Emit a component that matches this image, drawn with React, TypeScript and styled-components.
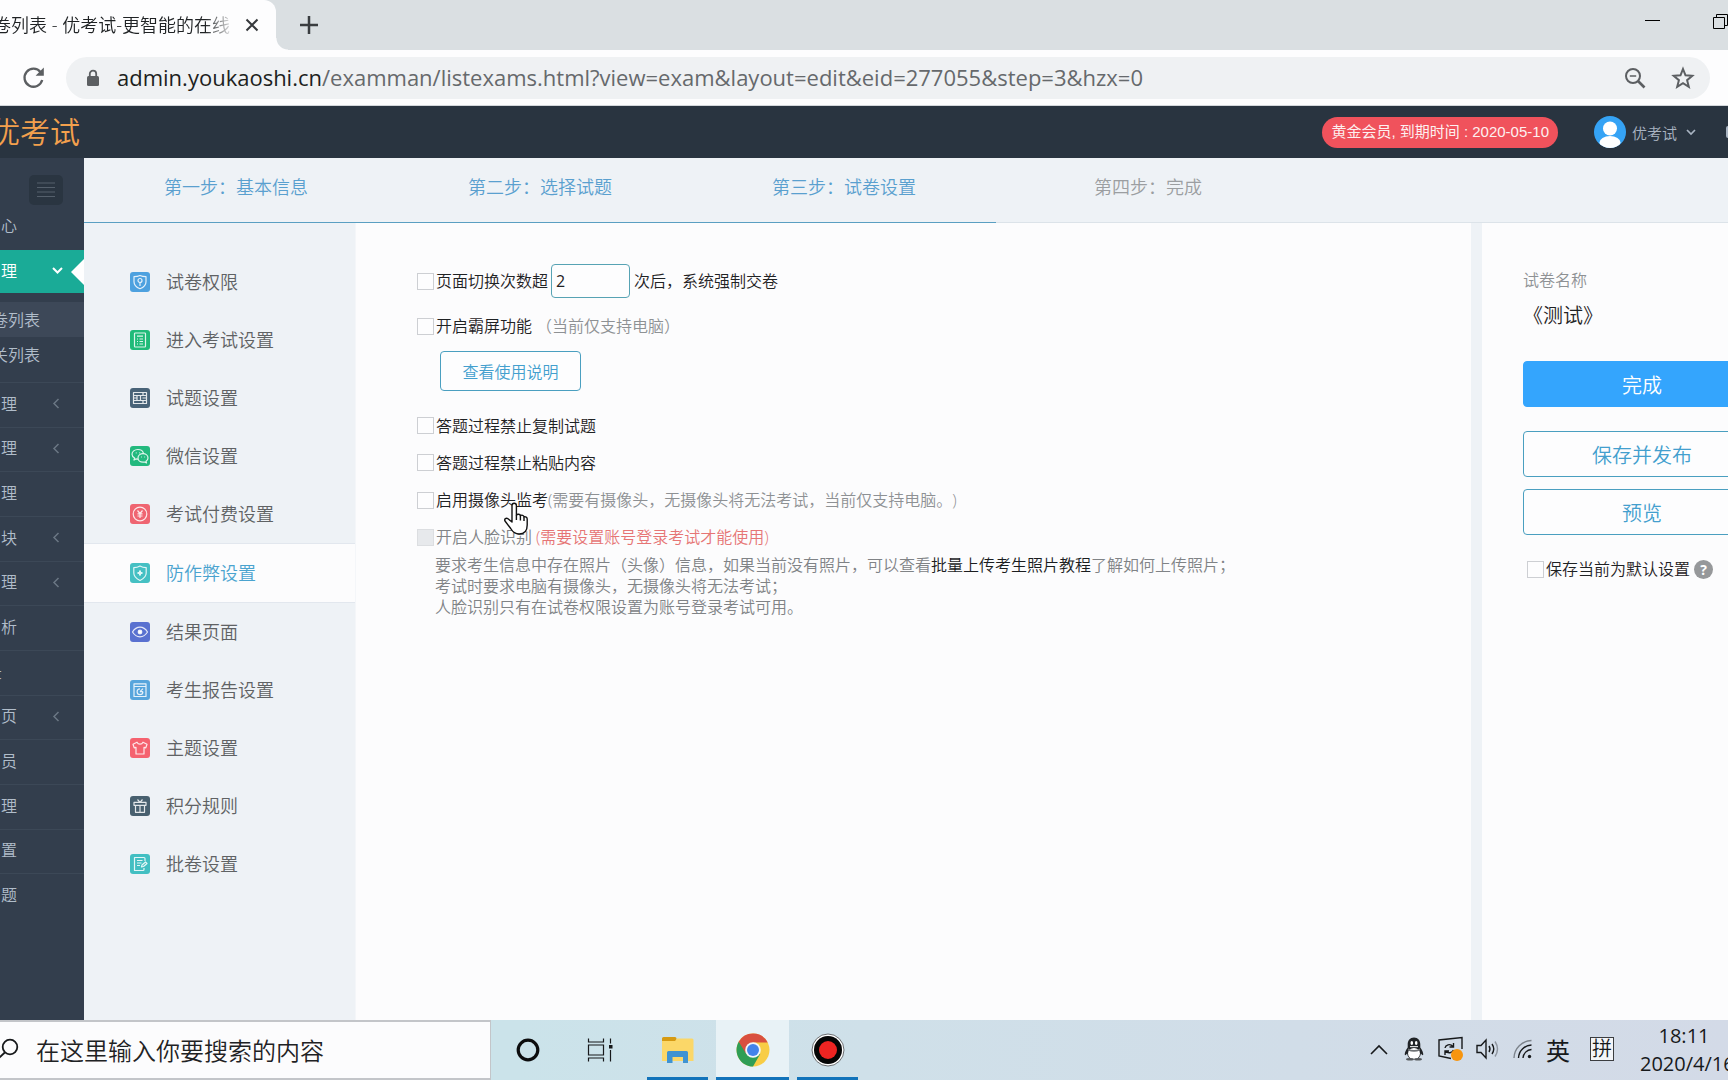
import React from 'react';
import styled, { createGlobalStyle } from 'styled-components';

const CJK = '"Noto Sans CJK SC", sans-serif';

const Global = createGlobalStyle`
  *, *::before, *::after { box-sizing: border-box; }
  body {
    margin: 0;
    overflow: hidden;
    font-family: "Open Sans", ${CJK};
    font-size: 16px;
    font-weight: 350;
    color: #1f2224;
    text-spacing-trim: space-all;
  }
  button, input { font: inherit; color: inherit; }
  button { padding: 0; border: 0; background: none; cursor: pointer; }
  ul { list-style: none; margin: 0; padding: 0; }
  a { color: inherit; text-decoration: none; }
  svg { display: block; flex: none; }
`;

const Screen = styled.div`
  display: flex;
  flex-direction: column;
  height: 100vh;
  overflow: hidden;
  background: #fcfcfd;
`;

/* ---------- browser chrome ---------- */

const TabStrip = styled.div`
  display: flex;
  height: 50px;
  flex: none;
  background: #dadfe2;
`;
const Tab = styled.div`
  display: flex;
  align-items: center;
  justify-content: space-between;
  width: 276px;
  padding-right: 16px;
  background: #fdfdfe;
  border-top-right-radius: 12px;
`;
const TabTitle = styled.span`
  display: flex;
  justify-content: flex-end;
  width: 230px;
  overflow: hidden;
  white-space: nowrap;
  font-size: 18px;
  line-height: 30px;
  mask-image: linear-gradient(to right, #000 205px, transparent 235px);
`;
const TabFoot = styled.div`
  flex: 1;
  display: flex;
  align-items: center;
  justify-content: space-between;
  background: radial-gradient(circle at 100% 0, #dadfe2 11px, #fdfdfe 12px) 0 100% / 12px 12px no-repeat;
`;
const IconButton = styled.button`
  display: flex;
  align-items: center;
  justify-content: center;
`;
const NewTab = styled(IconButton)`
  width: 66px;
  height: 50px;
`;
const WindowButtons = styled.div`
  display: flex;
  align-items: center;
  gap: 53px;
  padding-bottom: 8px;
`;
const Toolbar = styled.div`
  display: flex;
  align-items: center;
  gap: 21px;
  height: 56px;
  flex: none;
  padding: 0 18px 0 22px;
  background: #fdfdfe;
  border-bottom: 1px solid #d3d7db;
`;
const AddressBar = styled.div`
  display: flex;
  align-items: center;
  flex: 1;
  height: 42px;
  padding: 0 14px 0 18px;
  border-radius: 21px;
  background: #eff1f3;
`;
const Address = styled.span`
  flex: 1;
  margin-left: 15px;
  padding-bottom: 2px;
  font-family: "Open Sans", sans-serif;
  font-weight: 400;
  font-size: 22px;
  line-height: 30px;
  color: #66696c;
  b { font-weight: 400; color: #1d1f21; }
`;
const AddressTools = styled.div`
  display: flex;
  align-items: center;
  gap: 24px;
`;

/* ---------- site header ---------- */

const SiteHeader = styled.header`
  display: flex;
  align-items: center;
  justify-content: space-between;
  height: 52px;
  flex: none;
  background: #293440;
`;
const Brand = styled.a`
  display: flex;
  justify-content: flex-end;
  width: 80px;
  overflow: hidden;
  white-space: nowrap;
  font-size: 30px;
  line-height: 48px;
  color: #f3a04d;
`;
const HeaderRight = styled.div`
  display: flex;
  align-items: center;
`;
const Badge = styled.span`
  height: 31px;
  padding: 0 9px;
  margin-right: 36px;
  border-radius: 16px;
  background: #f0525c;
  color: #fdf0f0;
  font-family: "Liberation Sans", ${CJK};
  font-weight: 400;
  font-size: 15px;
  line-height: 29px;
`;
const Account = styled.button`
  display: flex;
  align-items: center;
  gap: 6px;
  color: #a9b4c2;
  font-size: 15px;
`;
const ChevronGap = styled.span`
  margin-left: 3px;
`;
const Cut = styled.span`
  width: 2px;
  height: 12px;
  margin-left: 30px;
  border-radius: 6px 0 0 6px;
  background: #a9b4c2;
`;

/* ---------- body ---------- */

const Body = styled.div`
  display: flex;
  flex: 1;
  min-height: 0;
`;
const Rail = styled.nav`
  width: 84px;
  flex: none;
  overflow: hidden;
  background: #333e4d;
  color: #b1bdca;
`;
const RailTop = styled.div`
  display: flex;
  justify-content: flex-end;
  height: 45px;
  padding: 17px 21px 0 0;
`;
const Burger = styled(IconButton)`
  width: 34px;
  height: 30px;
  flex: none;
  border-radius: 5px;
  background: #2a3541;
  color: #55606c;
`;
const RailItem = styled.a<{ $active?: boolean; $h?: number }>`
  display: flex;
  align-items: center;
  justify-content: space-between;
  height: ${p => (p.$h ? `${p.$h}px` : 'auto')};
  padding: 0 21px 2px 0;
  background: ${p => (p.$active ? '#1aab97' : 'transparent')};
  color: ${p => (p.$active ? '#fff' : 'inherit')};
`;
const RailLabel = styled.span<{ $w?: number }>`
  display: flex;
  justify-content: flex-end;
  width: ${p => p.$w ?? 17}px;
  flex: none;
  overflow: hidden;
  white-space: nowrap;
  line-height: 24px;
`;
const ActiveRow = styled.div`
  position: relative;
`;
const Notch = styled.span`
  position: absolute;
  right: 0;
  top: 9px;
  border: 13px solid transparent;
  border-right-color: #fff;
  border-left: 0;
`;
const SubList = styled.ul`
  padding: 9px 0 10px;
`;
const SubItem = styled.a<{ $active?: boolean }>`
  display: flex;
  align-items: center;
  height: 35px;
  background: ${p => (p.$active ? '#3d4858' : 'transparent')};
`;
const RailGroup = styled.ul`
  display: grid;
  grid-template-rows: repeat(12, 1fr);
  height: 536px;
  li { display: grid; border-top: 1px solid #3c4857; }
`;

const Work = styled.main`
  display: flex;
  flex-direction: column;
  flex: 1;
  min-width: 0;
  background: #eef2f6;
`;
const Steps = styled.ol`
  display: flex;
  height: 65px;
  flex: none;
  margin: 0;
  padding: 0;
  list-style: none;
  border-bottom: 1px solid #dce3e9;
`;
const Step = styled.li<{ $done?: boolean }>`
  width: 304px;
  height: 65px;
  padding-top: 16px;
  text-align: center;
  font-size: 18px;
  line-height: 26px;
  color: ${p => (p.$done ? '#5aa0cf' : '#9b9ea1')};
  border-bottom: 1px solid ${p => (p.$done ? '#5a9fc2' : 'transparent')};
`;
const Columns = styled.div`
  display: flex;
  flex: 1;
  min-height: 0;
`;
const SideMenu = styled.nav`
  width: 272px;
  flex: none;
  padding-top: 30px;
  border-right: 1px solid #f4f6f9;
`;
const MenuItem = styled.a<{ $active?: boolean }>`
  display: flex;
  align-items: center;
  gap: 16px;
  height: ${p => (p.$active ? 60 : 58)}px;
  padding-left: 46px;
  font-size: 18px;
  line-height: 26px;
  color: ${p => (p.$active ? '#4aa3cf' : '#5f6264')};
  background: ${p => (p.$active ? '#fcfcfd' : 'transparent')};
  border: solid #e2e7ee;
  border-width: ${p => (p.$active ? '1px 0' : '0')};
`;
const Form = styled.form`
  flex: 1;
  min-width: 0;
  padding: 37px 24px 0 61px;
  background: #fcfcfd;
`;
const Row = styled.div<{ $h: number }>`
  display: flex;
  align-items: center;
  height: ${p => p.$h}px;
  line-height: 24px;
  white-space: nowrap;
`;
const Check = styled.input.attrs({ type: 'checkbox' })`
  appearance: none;
  width: 17px;
  height: 17px;
  flex: none;
  margin: 0 2px 0 0;
  border: 1px solid #cdcfd3;
  background: #fdfdfe;
  &:checked { background: #34a5fd; }
  &:disabled { background: #e7e9ec; border-color: #dcdee1; }
`;
const Muted = styled.span<{ $gap?: boolean }>`
  color: #8e9194;
  margin-left: ${p => (p.$gap ? '4px' : '0')};
`;
const Warn = styled.span`
  margin-left: 4px;
  color: #e67575;
`;
const FadedLabel = styled.label`
  color: #808386;
`;
const CountInput = styled.input`
  width: 79px;
  height: 34px;
  margin: 0 4px 0 3px;
  padding: 0 4px;
  border: 1px solid #57a3b4;
  border-radius: 4px;
  background: #fdfdfe;
  outline: 0;
  font-weight: 400;
`;
const Outline = styled.button<{ $large?: boolean }>`
  width: ${p => (p.$large ? 238 : 141)}px;
  height: ${p => (p.$large ? 46 : 40)}px;
  flex: none;
  border: 1px solid #4a9fc0;
  border-radius: 4px;
  background: #fdfdfe;
  color: #439fce;
  font-size: ${p => (p.$large ? 20 : 16)}px;
`;
const Guide = styled.div`
  padding: 1px 0 16px 23px;
`;
const Note = styled.p`
  margin: 0;
  padding-left: 18px;
  line-height: 21px;
  color: #808386;
  a { color: #1b1d1f; }
`;
const Aside = styled.aside`
  display: flex;
  flex-direction: column;
  align-items: flex-start;
  width: 246px;
  flex: none;
  overflow: hidden;
  margin-left: 11px;
  padding: 45px 0 0 41px;
  background: #fcfcfd;
`;
const AsideLabel = styled.span`
  line-height: 24px;
  color: #8e9194;
`;
const ExamName = styled.strong`
  margin: 9px 0 30px;
  font-weight: 350;
  font-size: 20px;
  line-height: 30px;
`;
const Actions = styled.div`
  display: flex;
  flex-direction: column;
  gap: 12px;
`;
const Finish = styled(Outline)`
  margin-bottom: 12px;
  border-color: #34a5fd;
  background: #34a5fd;
  color: #fff;
`;
const DefaultRow = styled.div`
  display: flex;
  align-items: center;
  padding: 22px 0 0 4px;
  line-height: 24px;
  white-space: nowrap;
`;
const Help = styled.button`
  width: 19px;
  height: 19px;
  margin-left: 4px;
  border-radius: 50%;
  background: #96989a;
  color: #fff;
  font-family: "Open Sans", sans-serif;
  font-weight: 700;
  font-size: 14px;
  line-height: 19px;
`;

/* ---------- taskbar ---------- */

const Taskbar = styled.footer`
  display: flex;
  height: 60px;
  flex: none;
  background: linear-gradient(to right, #cbe3ea 30%, #cfe0e9 50%, #d3dae7);
`;
const Search = styled.label`
  display: flex;
  align-items: center;
  gap: 17px;
  width: 491px;
  flex: none;
  background: #fcfcfd;
  border: solid #c3c5c9;
  border-width: 2px 1px 2px 0;
`;
const SearchInput = styled.input`
  flex: 1;
  min-width: 0;
  padding: 2px 0 0;
  border: 0;
  outline: 0;
  background: none;
  font-size: 24px;
  line-height: 36px;
  &::placeholder { color: #1f2224; opacity: 1; }
`;
const Apps = styled.div`
  display: flex;
  gap: 8px;
  flex: 1;
`;
const SystemApps = styled.div`
  display: flex;
  width: 148px;
`;
const AppButton = styled.button<{ $w: number; $open?: boolean; $front?: boolean }>`
  display: flex;
  align-items: center;
  justify-content: center;
  width: ${p => p.$w}px;
  height: 60px;
  border: solid ${p => (p.$open ? '#1273ba' : 'transparent')};
  border-width: 3px 0;
  border-top-color: transparent;
  background: ${p => (p.$front ? '#e8f2f6' : 'transparent')};
`;
const Tray = styled.div`
  display: flex;
  align-items: center;
  flex: none;
  padding-bottom: 2px;
  color: #17191b;
`;
const TraySlot = styled.button<{ $w: number }>`
  display: flex;
  align-items: center;
  justify-content: center;
  width: ${p => p.$w}px;
  height: 56px;
`;
const Lang = styled(TraySlot)`
  font-size: 24px;
  font-weight: 400;
`;
const Ime = styled.span`
  width: 24px;
  height: 24px;
  border: 1px solid #3b3d40;
  background: #f3f5f8;
  font-size: 20px;
  line-height: 21px;
`;
const Clock = styled.div`
  width: 88px;
  flex: none;
  margin-left: 13px;
  padding-top: 2px;
  text-align: center;
  white-space: nowrap;
  font-family: "Open Sans", sans-serif;
  font-weight: 400;
  font-size: 20px;
  line-height: 28px;
`;

/* ---------- drawings ---------- */

const Arrow = ({ down }: { down?: boolean }) =>
  down ? (
    <svg width="11" height="7" viewBox="0 0 11 7" fill="none" stroke="currentColor" strokeWidth="2">
      <path d="M1 1l4.5 4.5L10 1" />
    </svg>
  ) : (
    <svg width="11" height="11" viewBox="0 0 11 11" fill="none" stroke="#6b7784" strokeWidth="1.5">
      <path d="M6.5 1L2 5.5 6.5 10" />
    </svg>
  );

const glyphs: Record<string, React.ReactNode> = {
  shieldPin: (
    <>
      <path d="M10 3.500c2 1 3.800 1.200 6 1.200v5c0 3.300-2.500 5.600-6 7-3.500-1.400-6-3.700-6-7v-5c2.200 0 4-.2 6-1.200z" />
      <circle cx="10" cy="8.500" r="2" />
      <path d="M10 10.500v3.500" />
    </>
  ),
  form: (
    <>
      <rect x="4.500" y="3" width="11" height="14" rx=".8" />
      <path d="M7 6.200h6M7 9h1M9.500 9H13M7 11.500h1M9.500 11.500H13M7 14h1M9.500 14H13" />
    </>
  ),
  questions: (
    <path d="M3.500 4.500h13v11h-13zM7 7.500h3.500v5H7zM3.500 7.500H7M3.500 10H7M3.500 12.500H7M10.500 7.500H16.500M12.500 10H16.500M10.500 12.500H16.500M13 4.500v3M13 12.500v3" />
  ),
  wechat: (
    <>
      <path d="M8 13.200c-.7 0-1.200-.1-1.800-.3L4 14l.6-2C3 11 2 9.700 2 8.200 2 5.600 4.600 3.500 7.800 3.500c2.900 0 5.200 1.600 5.700 3.900" />
      <path d="M18 12c0-2.400-2.200-4.300-5-4.300S8 9.600 8 12s2.200 4.200 5 4.200c.6 0 1.100-.1 1.600-.2l1.900.9-.5-1.700c1.200-.8 2-1.900 2-3.200z" />
      <path d="M5.800 6.800h.8M9.300 6.800h.8M11 11h.8M14.300 11h.8" />
    </>
  ),
  yen: (
    <>
      <circle cx="10" cy="10" r="6.800" />
      <path d="M7.500 6.500L10 9.500l2.500-3M10 9.500V14M7.500 9.800h5M7.500 12h5" />
    </>
  ),
  shieldPlus: (
    <>
      <path d="M10 3c2 1.200 4 1.600 6.200 1.600v5.400c0 3.400-2.500 5.700-6.200 7.500-3.700-1.800-6.200-4.100-6.200-7.500V4.600C6 4.600 8 4.200 10 3z" />
      <path d="M10 7.500v5M7.500 10h5" strokeWidth="2" />
    </>
  ),
  eye: (
    <>
      <path d="M2.500 10C4.500 6.800 7 5.200 10 5.200s5.500 1.600 7.500 4.800c-2 3.200-4.500 4.800-7.500 4.800S4.500 13.200 2.500 10z" />
      <circle cx="10" cy="10" r="1.800" fill="#fff" />
    </>
  ),
  report: (
    <>
      <path d="M4 3.800h12v12.700H4zM4 6.500h12" />
      <path d="M10 8.800a2.900 2.900 0 1 0 2.900 2.900M10 11.700l3-3M10 11.700h2.900" />
    </>
  ),
  shirt: <path d="M7 4.200L3 6.200l1.200 3.600 1.800-.5V16h8V9.300l1.800.5L17 6.200l-4-2c-.6 1.300-1.600 1.900-3 1.900s-2.400-.6-3-1.900z" />,
  gift: <path d="M4 6.300h12v3H4zM5.500 9.300h9v7h-9zM10 9.300v7M7.500 3.500l2.500 2.800 2.500-2.800" />,
  marking: (
    <>
      <path d="M15 7V4.500a1 1 0 0 0-1-1H4.500v13H13a1 1 0 0 0 1-1V14M7 6.500h5.500M7 9h4.500M7 11.500h3" />
      <path d="M11.500 13l.5-2 3.500-3 1.500 1.500-3.500 3z" />
    </>
  ),
};

const MenuIcon = ({ glyph, color }: { glyph: string; color: string }) => (
  <svg width="20" height="20" viewBox="0 0 20 20">
    <rect width="20" height="20" rx="3" fill={color} />
    <g fill="none" stroke="#fff" strokeOpacity=".85" strokeWidth="1.2" strokeLinejoin="round">
      {glyphs[glyph]}
    </g>
  </svg>
);

const menu = [
  ['试卷权限', 'shieldPin', '#4da1df'],
  ['进入考试设置', 'form', '#20bb79'],
  ['试题设置', 'questions', '#486378'],
  ['微信设置', 'wechat', '#22b97e'],
  ['考试付费设置', 'yen', '#ef6571'],
  ['防作弊设置', 'shieldPlus', '#45c0c3'],
  ['结果页面', 'eye', '#5971d0'],
  ['考生报告设置', 'report', '#57a5dc'],
  ['主题设置', 'shirt', '#f5626f'],
  ['积分规则', 'gift', '#48606f'],
  ['批卷设置', 'marking', '#42bfc2'],
];

const rail: { label: string; arrow?: boolean; width?: number }[] = [
  { label: '理', arrow: true },
  { label: '理', arrow: true },
  { label: '理' },
  { label: '块', arrow: true },
  { label: '理', arrow: true },
  { label: '析' },
  { label: '录', width: 2 },
  { label: '页', arrow: true },
  { label: '员' },
  { label: '理' },
  { label: '置' },
  { label: '题' },
];

const steps = ['第一步：基本信息', '第二步：选择试题', '第三步：试卷设置', '第四步：完成'];

const Pointer = styled.svg`
  position: absolute;
  left: 503px;
  top: 502px;
  pointer-events: none;
`;

export default function App() {
  return (
    <Screen>
      <Global />
      <TabStrip>
        <Tab>
          <TabTitle>卷列表 - 优考试-更智能的在线</TabTitle>
          <IconButton aria-label="关闭标签页">
            <svg width="16" height="16" viewBox="0 0 16 16" stroke="#36393c" strokeWidth="2">
              <path d="M2.500 2.500l11 11M13.500 2.500l-11 11" />
            </svg>
          </IconButton>
        </Tab>
        <TabFoot>
          <NewTab aria-label="新标签页">
            <svg width="18" height="18" viewBox="0 0 18 18" stroke="#3a3d40" strokeWidth="2.500">
              <path d="M9 0v18M0 9h18" />
            </svg>
          </NewTab>
          <WindowButtons>
            <IconButton aria-label="最小化">
              <svg width="15" height="15" viewBox="0 0 15 15"><path d="M0 6.500h15" stroke="#000" /></svg>
            </IconButton>
            <IconButton aria-label="还原">
              <svg width="15" height="15" viewBox="0 0 15 15" fill="none" stroke="#000">
                <path d="M.5 3.500h11v11H.5zM3.500 3.500v-3H14.500v11h-3" />
              </svg>
            </IconButton>
          </WindowButtons>
        </TabFoot>
      </TabStrip>
      <Toolbar>
        <IconButton aria-label="重新加载">
          <svg width="23" height="23" viewBox="0 0 23 23" fill="none" stroke="#5c5f62" strokeWidth="2.300">
            <path d="M18.600 6.200A9 9 0 1 0 20.200 14" />
            <path d="M21.800 1.500v8.200h-8.200z" fill="#5c5f62" stroke="none" />
          </svg>
        </IconButton>
        <AddressBar>
          <svg width="18" height="20" viewBox="0 0 18 20">
            <rect x="3" y="8" width="12" height="10" rx="1.500" fill="#5c5f62" />
            <path d="M5.800 8.500V5.800a3.200 3.200 0 0 1 6.400 0v2.700" fill="none" stroke="#5c5f62" strokeWidth="1.800" />
          </svg>
          <Address>
            <b>admin.youkaoshi.cn</b>/examman/listexams.html?view=exam&amp;layout=edit&amp;eid=277055&amp;step=3&amp;hzx=0
          </Address>
          <AddressTools>
            <IconButton aria-label="缩放">
              <svg width="22" height="22" viewBox="0 0 22 22" fill="none" stroke="#5c5f62" strokeWidth="2">
                <circle cx="9" cy="9" r="7" />
                <path d="M14 14l6.500 6.500" strokeWidth="2.600" />
                <path d="M5.800 9h6.400" strokeWidth="1.500" />
              </svg>
            </IconButton>
            <IconButton aria-label="收藏">
              <svg width="26" height="26" viewBox="0 0 26 26" fill="none" stroke="#5c5f62" strokeWidth="2">
                <path d="M13 4l2.500 6.300 6.800.5-5.200 4.400 1.700 6.600L13 18.200l-5.800 3.600 1.700-6.600-5.200-4.400 6.800-.5z" />
              </svg>
            </IconButton>
          </AddressTools>
        </AddressBar>
      </Toolbar>

      <SiteHeader>
        <Brand href="#">优考试</Brand>
        <HeaderRight>
          <Badge>黄金会员, 到期时间 : 2020-05-10</Badge>
          <Account>
            <svg width="32" height="32" viewBox="0 0 32 32">
              <clipPath id="avatar"><circle cx="16" cy="16" r="16" /></clipPath>
              <g clipPath="url(#avatar)">
                <rect width="32" height="32" fill="#35a3f5" />
                <circle cx="16" cy="12.500" r="7" fill="#fff" />
                <ellipse cx="16" cy="26.500" rx="10.500" ry="6.500" fill="#fff" />
              </g>
            </svg>
            优考试
            <ChevronGap>
              <svg width="10" height="7" viewBox="0 0 10 7" fill="none" stroke="currentColor" strokeWidth="1.700">
                <path d="M1 1l4 4 4-4" />
              </svg>
            </ChevronGap>
          </Account>
          <Cut />
        </HeaderRight>
      </SiteHeader>

      <Body>
        <Rail>
          <RailTop>
            <Burger aria-label="菜单">
              <svg width="18" height="16" viewBox="0 0 18 16" stroke="currentColor" strokeWidth="1.200">
                <path d="M0 1h18M0 5.500h18M0 10h18M0 14.500h18" />
              </svg>
            </Burger>
          </RailTop>
          <RailItem href="#" $h={47}><RailLabel>心</RailLabel></RailItem>
          <ActiveRow>
            <RailItem href="#" $h={43} $active>
              <RailLabel>理</RailLabel>
              <Arrow down />
            </RailItem>
            <Notch />
          </ActiveRow>
          <SubList>
            <li><SubItem href="#" $active><RailLabel $w={40}>卷列表</RailLabel></SubItem></li>
            <li><SubItem href="#"><RailLabel $w={40}>关列表</RailLabel></SubItem></li>
          </SubList>
          <RailGroup>
            {rail.map((r, i) => (
              <li key={i}>
                <RailItem href="#">
                  <RailLabel $w={r.width}>{r.label}</RailLabel>
                  {r.arrow && <Arrow />}
                </RailItem>
              </li>
            ))}
          </RailGroup>
        </Rail>

        <Work>
          <Steps>
            {steps.map((s, i) => <Step key={s} $done={i < 3}>{s}</Step>)}
          </Steps>
          <Columns>
            <SideMenu>
              {menu.map(([label, glyph, color], i) => (
                <MenuItem key={label} href="#" $active={i === 5}>
                  <MenuIcon glyph={glyph} color={color} />
                  {label}
                </MenuItem>
              ))}
            </SideMenu>

            <Form onSubmit={e => e.preventDefault()}>
              <Row $h={42}>
                <Check id="switch" />
                <label htmlFor="switch">页面切换次数超</label>
                <CountInput aria-label="次数" defaultValue="2" />
                <label htmlFor="switch">次后，系统强制交卷</label>
              </Row>
              <Row $h={48}>
                <Check id="lock" />
                <label htmlFor="lock">开启霸屏功能</label>
                <Muted $gap>（当前仅支持电脑）</Muted>
              </Row>
              <Guide>
                <Outline type="button">查看使用说明</Outline>
              </Guide>
              <Row $h={37}>
                <Check id="copy" />
                <label htmlFor="copy">答题过程禁止复制试题</label>
              </Row>
              <Row $h={37}>
                <Check id="paste" />
                <label htmlFor="paste">答题过程禁止粘贴内容</label>
              </Row>
              <Row $h={38}>
                <Check id="camera" />
                <label htmlFor="camera">启用摄像头监考</label>
                <Muted>(需要有摄像头，无摄像头将无法考试，当前仅支持电脑。)</Muted>
              </Row>
              <Row $h={36}>
                <Check id="face" disabled />
                <FadedLabel htmlFor="face">开启人脸识别</FadedLabel>
                <Warn>(需要设置账号登录考试才能使用)</Warn>
              </Row>
              <Note>
                要求考生信息中存在照片（头像）信息，如果当前没有照片，可以查看<a href="#">批量上传考生照片教程</a>了解如何上传照片；<br />
                考试时要求电脑有摄像头，无摄像头将无法考试；<br />
                人脸识别只有在试卷权限设置为账号登录考试可用。
              </Note>
            </Form>

            <Aside>
              <AsideLabel>试卷名称</AsideLabel>
              <ExamName>《测试》</ExamName>
              <Actions>
                <Finish type="button" $large>完成</Finish>
                <Outline type="button" $large>保存并发布</Outline>
                <Outline type="button" $large>预览</Outline>
              </Actions>
              <DefaultRow>
                <Check id="default" />
                <label htmlFor="default">保存当前为默认设置</label>
                <Help type="button">?</Help>
              </DefaultRow>
            </Aside>
          </Columns>
        </Work>
      </Body>

      <Taskbar>
        <Search>
          <svg width="19" height="24" viewBox="0 0 19 24" fill="none" stroke="#17191b" strokeWidth="1.800">
            <circle cx="10" cy="9" r="7.300" />
            <path d="M4.800 14.500L-2 21" />
          </svg>
          <SearchInput placeholder="在这里输入你要搜索的内容" aria-label="搜索" />
        </Search>
        <Apps>
          <SystemApps>
            <AppButton $w={74} aria-label="Cortana">
              <svg width="24" height="24" viewBox="0 0 24 24"><circle cx="12" cy="12" r="9.800" fill="none" stroke="#0c0d0e" strokeWidth="3.200" /></svg>
            </AppButton>
            <AppButton $w={70} aria-label="任务视图">
              <svg width="26" height="24" viewBox="0 0 26 24" fill="none" stroke="#17191b" strokeWidth="1.200">
                <path d="M1.500 .5v3.500h15V.5M1.500 7h15v10h-15zM1.500 23.500v-3.500h15v3.500M23.500 .5v5M23.500 12v11.500" />
                <rect x="22" y="7" width="3.500" height="3.500" fill="#17191b" stroke="none" />
              </svg>
            </AppButton>
          </SystemApps>
          <AppButton $w={61} $open aria-label="文件资源管理器">
            <svg width="34" height="28" viewBox="0 0 34 28">
              <path d="M1 2.500A1.500 1.500 0 0 1 2.500 1H14a1.500 1.500 0 0 1 1.500 1.500V6H1z" fill="#d69a12" />
              <path d="M1 5h13l2-2.500h15A1.500 1.500 0 0 1 32.500 4v21H1z" fill="#fbd768" />
              <path d="M6 27V16.500A1.500 1.500 0 0 1 7.500 15h18a1.500 1.500 0 0 1 1.500 1.500V27h-5v-6H11.500v6z" fill="#3f93d2" />
            </svg>
          </AppButton>
          <AppButton $w={73} $open $front aria-label="Chrome">
            <svg width="34" height="34" viewBox="0 0 34 34">
              <circle cx="17" cy="17" r="16.500" fill="#f8cd45" />
              <path d="M17 17L2.700 8.800A16.500 16.500 0 0 0 17 33.500l7.200-12.400z" fill="#2f9e55" />
              <path d="M17 9.500h14.700A16.500 16.500 0 0 0 2.700 8.800l7.600 12.200z" fill="#d9503f" />
              <circle cx="17" cy="17" r="7.800" fill="#f3f6f8" />
              <circle cx="17" cy="17" r="6" fill="#4383ea" />
            </svg>
          </AppButton>
          <AppButton $w={61} $open aria-label="录屏">
            <svg width="34" height="34" viewBox="0 0 34 34">
              <circle cx="17" cy="17" r="16" fill="#fff" stroke="#6d6f72" />
              <circle cx="17" cy="17" r="14" fill="#060606" />
              <circle cx="17" cy="17" r="9" fill="#ee2422" />
            </svg>
          </AppButton>
        </Apps>
        <Tray>
          <TraySlot $w={32} aria-label="显示隐藏的图标">
            <svg width="18" height="11" viewBox="0 0 18 11" fill="none" stroke="currentColor" strokeWidth="1.600"><path d="M1 10l8-8 8 8" /></svg>
          </TraySlot>
          <TraySlot $w={38} aria-label="QQ">
            <svg width="20" height="24" viewBox="0 0 20 24">
              <path d="M10 .5c4 0 6.300 3 6.300 7v3c2 2.500 3.200 5.500 2.900 7.500-.8.500-1.700-.6-2.300-1.500-.2 1.800-1 3.300-2.200 4.500H5.300C4.100 19.800 3.300 18.300 3.100 16.500 2.500 17.400 1.600 18.500.8 18c-.3-2 .9-5 2.900-7.500v-3c0-4 2.300-7 6.300-7z" fill="#202326" />
              <ellipse cx="10" cy="16.500" rx="6" ry="5.500" fill="#fff" />
              <ellipse cx="7.800" cy="6" rx="1.300" ry="1.900" fill="#fff" />
              <ellipse cx="12.200" cy="6" rx="1.300" ry="1.900" fill="#fff" />
              <path d="M6 9h8v1.200H6z" fill="#d9dbdd" />
              <path d="M4 11.500c4 2 8 2 12 0v2c-4 1.800-8 1.800-12 0z" fill="#6f7275" />
              <ellipse cx="6" cy="22.300" rx="4" ry="1.300" fill="#55585b" />
              <ellipse cx="14" cy="22.300" rx="4" ry="1.300" fill="#55585b" />
            </svg>
          </TraySlot>
          <TraySlot $w={36} aria-label="更新">
            <svg width="26" height="26" viewBox="0 0 26 26" fill="none" stroke="currentColor" strokeWidth="1.400">
              <path d="M24 13V1.500L1 4v16l12 2.500" />
              <path d="M7 12c.5-3 5-5 8-1.500M15.500 7v4h-4M15.500 14c-1 3-5.500 4-8 1M7 19v-4h4" />
              <circle cx="19" cy="19" r="6" fill="#f7950f" stroke="none" />
            </svg>
          </TraySlot>
          <TraySlot $w={38} aria-label="音量">
            <svg width="24" height="22" viewBox="0 0 24 22" fill="none" stroke="currentColor" strokeWidth="1.400">
              <path d="M1 7.500h4L10 2v18l-5-5.500H1z" />
              <path d="M13 8q2 3 0 6M16 6q3.500 5 0 10" />
              <path d="M19 3.500q5 7.500 0 15" stroke="#8e959e" />
            </svg>
          </TraySlot>
          <TraySlot $w={32} aria-label="网络">
            <svg width="20" height="20" viewBox="0 0 20 20" fill="none" stroke="currentColor" strokeWidth="1.400">
              <path d="M1 19A18 18 0 0 1 18.500 1.500" stroke="#7c838b" />
              <path d="M5.500 19A13.500 13.500 0 0 1 18.500 6M10 19a9 9 0 0 1 8.500-8.500" />
              <circle cx="16.500" cy="17.500" r="1.700" fill="currentColor" stroke="none" />
            </svg>
          </TraySlot>
          <Lang $w={38}>英</Lang>
          <TraySlot $w={50}><Ime>拼</Ime></TraySlot>
          <Clock>18:11<br />2020/4/16</Clock>
        </Tray>
      </Taskbar>

      <Pointer width="26" height="34" viewBox="0 0 26 34" fill="#fff" stroke="#111" strokeWidth="1.400" strokeLinejoin="round">
        <path d="M9 20V3.500a2.200 2.200 0 0 1 4.400 0V13c1-1.300 3.600-1 4 .6 1.300-.9 3.300-.3 3.600 1.200 1.500-.5 3.200.4 3.200 2.200v6c0 5-2.500 9-8 9-4.500 0-6.500-2-8.500-5.500L2 19c-1-2 1.200-3.600 3-2.200z" />
        <path d="M13.400 13v5M17.400 13.500v5M21 15v4" />
      </Pointer>
    </Screen>
  );
}
